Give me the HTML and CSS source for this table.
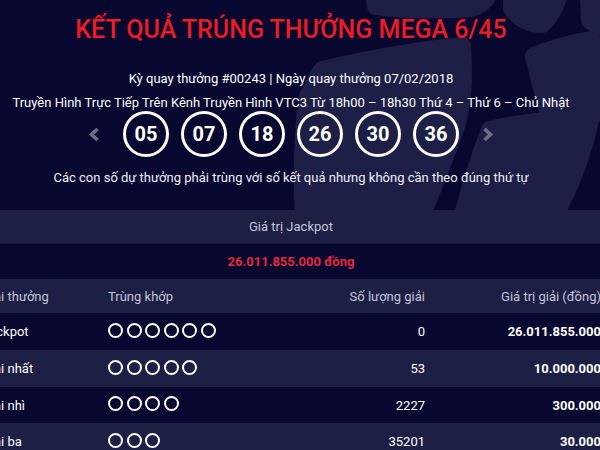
FILE: index.html
```html
<!DOCTYPE html>
<html lang="vi">
<head>
<meta charset="utf-8">
<link rel="stylesheet" href="styles.css">
</head>
<body>
<div class="page">
  <svg class="deco" width="600" height="210" viewBox="0 0 600 210" aria-hidden="true">
    <g fill="#1e1f47" stroke="#1e1f47" stroke-width="18" stroke-linejoin="round">
      <path d="M322 70 Q400 52 462 46 Q466 100 454 132 Q440 170 420 220 L304 220 Q300 150 308 96 Z"/>
      <path d="M372 -20 L492 -20 Q490 2 472 8 Q420 12 376 6 Z"/>
      <path d="M512 -20 L562 -20 Q558 10 542 24 Q522 24 512 8 Z"/>
      <path d="M534 56 Q566 44 592 40 Q610 80 600 112 Q574 112 548 110 Q540 82 534 56 Z"/>
      <path d="M490 130 Q540 118 590 120 Q580 170 552 220 L462 220 Q474 170 490 130 Z"/>
      <path d="M588 -20 L620 -20 L620 24 Q600 30 590 20 Z"/>
    </g>
  </svg>
  <div class="wrap">
    <header class="head">
      <h1 class="title">KẾT QUẢ TRÚNG THƯỞNG MEGA 6/45</h1>
      <p class="info">Kỳ quay thưởng #00243 | Ngày quay thưởng 07/02/2018</p>
      <p class="info info-2">Truyền Hình Trực Tiếp Trên Kênh Truyền Hình VTC3 Từ 18h00 – 18h30 Thứ 4 – Thứ 6 – Chủ Nhật</p>
      <div class="balls">
        <span class="arrow arrow-left"><svg width="12" height="15" viewBox="0 0 12 15"><path d="M9.5 2 L3.5 7.5 L9.5 13" fill="none" stroke="#6e7083" stroke-width="3.6"/></svg></span>
        <span class="ball">05</span>
        <span class="ball">07</span>
        <span class="ball">18</span>
        <span class="ball">26</span>
        <span class="ball">30</span>
        <span class="ball">36</span>
        <span class="arrow arrow-right"><svg width="12" height="15" viewBox="0 0 12 15"><path d="M2.5 2 L8.5 7.5 L2.5 13" fill="none" stroke="#6e7083" stroke-width="3.6"/></svg></span>
      </div>
      <p class="note">Các con số dự thưởng phải trùng với số kết quả nhưng không cần theo đúng thứ tự</p>
    </header>

    <div class="band">Giá trị Jackpot</div>
    <div class="jackpot">26.011.855.000 đồng</div>

    <div class="table">
      <div class="row row-head">
        <span class="c-name">Giải thưởng</span>
        <span class="c-match">Trùng khớp</span>
        <span class="c-count">Số lượng giải</span>
        <span class="c-value">Giá trị giải (đồng)</span>
      </div>
      <div class="row row-dark">
        <span class="c-name">Jackpot</span>
        <span class="c-match"><i class="dot"></i><i class="dot"></i><i class="dot"></i><i class="dot"></i><i class="dot"></i><i class="dot"></i></span>
        <span class="c-count">0</span>
        <span class="c-value strong">26.011.855.000</span>
      </div>
      <div class="row row-light">
        <span class="c-name">Giải nhất</span>
        <span class="c-match"><i class="dot"></i><i class="dot"></i><i class="dot"></i><i class="dot"></i><i class="dot"></i></span>
        <span class="c-count">53</span>
        <span class="c-value strong">10.000.000</span>
      </div>
      <div class="row row-dark row-short">
        <span class="c-name">Giải nhì</span>
        <span class="c-match"><i class="dot"></i><i class="dot"></i><i class="dot"></i><i class="dot"></i></span>
        <span class="c-count">2227</span>
        <span class="c-value strong">300.000</span>
      </div>
      <div class="row row-light">
        <span class="c-name">Giải ba</span>
        <span class="c-match"><i class="dot"></i><i class="dot"></i><i class="dot"></i></span>
        <span class="c-count">35201</span>
        <span class="c-value strong">30.000</span>
      </div>
    </div>
  </div>
</div>
</body>
</html>
```
FILE: styles.css
```css
html, body {
  margin: 0;
  padding: 0;
  background: #07072f;
  overflow: hidden;
}

body {
  font-family: Roboto, "Noto Sans", "Liberation Sans", sans-serif;
  color: #ffffff;
}

.page {
  position: relative;
  width: 600px;
  height: 450px;
  overflow: hidden;
}

.deco {
  position: absolute;
  left: 0;
  top: 0;
  z-index: 0;
}

.wrap {
  position: relative;
  z-index: 1;
  margin-left: -18px;
  width: 618px;
}

.head {
  height: 210px;
  padding-top: 15px;
  box-sizing: border-box;
  text-align: center;
}

.title {
  margin: 0;
  font-size: 25px;
  line-height: 30px;
  font-weight: 500;
  color: #ec1c24;
  letter-spacing: 0;
}

.info {
  margin: 22px 0 0;
  font-size: 13px;
  line-height: 24px;
}

.info-2 {
  margin-top: 4px;
  line-height: 16px;
}

.balls {
  display: flex;
  justify-content: center;
  align-items: center;
  gap: 12px;
  height: 46px;
}

.ball {
  width: 46px;
  height: 46px;
  box-sizing: border-box;
  border: 3px solid #ffffff;
  border-radius: 50%;
  display: flex;
  align-items: center;
  justify-content: center;
  font-size: 20px;
  font-weight: 700;
}

.arrow {
  display: flex;
  width: 12px;
  height: 15px;
}

.arrow-left { margin-right: 11px; }
.arrow-right { margin-left: 11px; }

.note {
  margin: 13px 0 0;
  font-size: 13px;
  line-height: 16px;
  color: #f0f0f6;
}

.band {
  height: 34px;
  background: #1e1f45;
  border-bottom: 1px solid #17183d;
  box-sizing: border-box;
  display: flex;
  align-items: center;
  justify-content: center;
  font-size: 13px;
  color: #c3c4d8;
}

.jackpot {
  height: 35px;
  display: flex;
  align-items: center;
  justify-content: center;
  font-size: 13px;
  font-weight: 700;
  color: #e8283c;
}

.table {
  width: 619px;
}

.row {
  display: grid;
  grid-template-columns: 126px 162px 155px 176px;
  align-items: center;
  height: 37px;
  font-size: 13px;
}

.row-head {
  height: 34px;
  background: #1e1f45;
  color: #c3c4d8;
}

.row-dark { background: #07072f; }
.row-light { background: #1e1f45; }
.row-short { height: 36px; }

.c-count, .c-value { text-align: right; }

.c-match {
  display: flex;
  gap: 3.5px;
  margin-top: -3px;
}

.strong { font-weight: 700; }

.dot {
  display: block;
  width: 15px;
  height: 15px;
  box-sizing: border-box;
  border: 2.8px solid #ffffff;
  border-radius: 50%;
}

.row-head .c-match { margin-top: 0; }
```
